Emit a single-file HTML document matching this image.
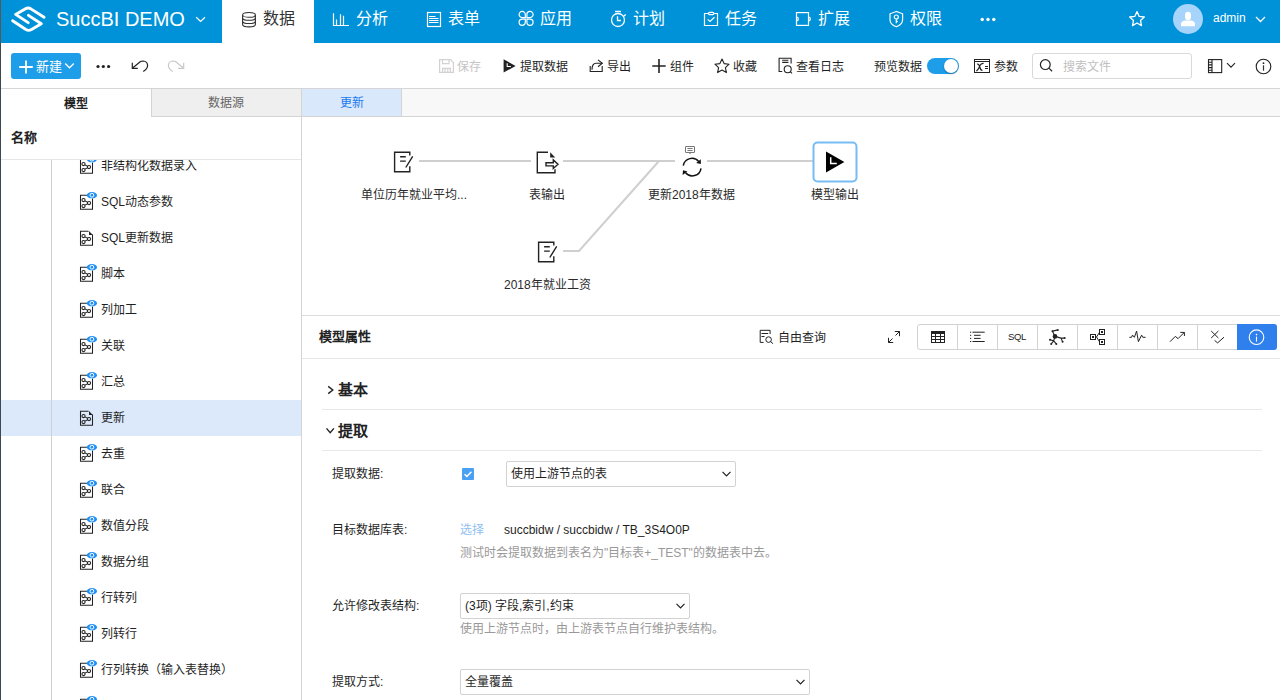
<!DOCTYPE html>
<html lang="zh-CN"><head><meta charset="utf-8">
<style>
*{margin:0;padding:0;box-sizing:border-box}
html,body{width:1280px;height:700px;overflow:hidden;background:#fff;font-family:"Liberation Sans",sans-serif;color:#333;font-size:12px}
.a{position:absolute}
svg{display:block}
#hdr{left:0;top:0;width:1280px;height:43px;background:#0092d8}
.nav{top:-3px;height:43px;color:#fff;font-size:16px;line-height:43px;white-space:nowrap}
.tb{top:43px;height:45px;left:0;width:1280px;background:#fff;border-bottom:1px solid #dcdcdc}
.tt{font-size:12px;line-height:14px;color:#1f1f1f;white-space:nowrap}
.row{left:1px;width:300px;height:36px}
.rt{font-size:12px;line-height:14px;color:#1f1f1f;white-space:nowrap}
.lbl{font-size:12px;line-height:14px;color:#2a2a2a;white-space:nowrap}
</style></head><body>
<!-- left dark edge -->
<div class="a" style="left:0;top:0;width:1px;height:43px;background:#5a5656;z-index:50"></div><div class="a" style="left:0;top:43px;width:1px;height:657px;background:#3f4852;z-index:50"></div>

<!-- HEADER -->
<div id="hdr" class="a"></div>
<div class="a" style="left:222px;top:0;width:92px;height:43px;background:#fff"></div>

<!-- logo -->
<svg class="a" style="left:8px;top:3px" width="42" height="33" viewBox="8 3 42 33"><g fill="none" stroke="#fff" stroke-width="2.9" stroke-linecap="round" stroke-linejoin="round"><path d="M44.1 17.3L31.3 9.1Q28.4 7.1 25.5 8.8L15.6 14.4 28.2 22.6"/><path d="M28.4 15.4L41.3 23.7 31.5 29.5Q28.7 31.2 25.9 29.5L12.6 20.8"/></g></svg>
<div class="a nav" style="left:56px;font-size:20px;top:-2px">SuccBI DEMO</div>
<svg class="a" style="left:195px;top:16px" width="12" height="8" viewBox="0 0 12 8"><path d="M1.2 1.2L5.6 5.4 10 1.2" fill="none" stroke="#fff" stroke-width="1.3"/></svg>
<!-- data tab icon -->
<svg class="a" style="left:241px;top:11px" width="17" height="17" viewBox="0 0 17 17"><g fill="none" stroke="#333" stroke-width="1.1"><ellipse cx="8" cy="3.9" rx="6.4" ry="2.4"/><path d="M1.6 3.9v9.7c0 1.3 2.9 2.3 6.4 2.3s6.4-1 6.4-2.3V3.9"/><path d="M1.6 7c0 1.3 2.9 2.3 6.4 2.3s6.4-1 6.4-2.3M1.6 10.2c0 1.3 2.9 2.3 6.4 2.3s6.4-1 6.4-2.3"/></g></svg>
<div class="a nav" style="left:263px;color:#333">数据</div>
<!-- 分析 -->
<svg class="a" style="left:332px;top:12px" width="18" height="15" viewBox="0 0 18 15"><g fill="none" stroke="#fff" stroke-width="1.2"><path d="M1.5 1.2v12.3H17"/><path d="M4.5 7.5v5.5M8.5 2.2v10.8M11.5 3.7v9.3"/></g></svg>
<div class="a nav" style="left:356px">分析</div>
<!-- 表单 -->
<svg class="a" style="left:426px;top:11px" width="16" height="17" viewBox="0 0 16 17"><g fill="none" stroke="#fff" stroke-width="1.2"><rect x="1.5" y="1.5" width="13" height="14"/><path d="M3 5.5h6.5M3 7.5h9.5M3 9.5h9.5M3 11.5h9.5"/></g></svg>
<div class="a nav" style="left:448px">表单</div>
<!-- 应用 -->
<svg class="a" style="left:514px;top:8px" width="24" height="22" viewBox="0 0 24 22"><g fill="none" stroke="#fff" stroke-width="1.2"><path d="M11.3 9.6H8.2A3.1 3.1 0 1 1 11.3 6.5Z"/><path d="M12.9 9.6H16A3.1 3.1 0 1 0 12.9 6.5Z"/><path d="M11.3 11.2H8.2A3.1 3.1 0 1 0 11.3 14.3Z"/><path d="M12.9 11.2H16A3.1 3.1 0 1 1 12.9 14.3Z"/></g></svg>
<div class="a nav" style="left:540px">应用</div>
<!-- 计划 -->
<svg class="a" style="left:610px;top:10px" width="18" height="18" viewBox="0 0 18 18"><g fill="none" stroke="#fff" stroke-width="1.3"><circle cx="8" cy="10" r="6.5"/><path d="M5.1 1.5h5.8M7.5 6.2v4.3h3.4M13.6 6.3l2.2-1.9"/></g></svg>
<div class="a nav" style="left:633px">计划</div>
<!-- 任务 -->
<svg class="a" style="left:703px;top:11px" width="16" height="16" viewBox="0 0 16 16"><g fill="none" stroke="#fff" stroke-width="1.2"><path d="M5.5 2.5H1.5V14.5H14.5V2.5H10.8"/><rect x="5.5" y="1.3" width="5.3" height="2.3" rx="1.1"/><path d="M4.6 8.4L7 10.4 11.5 6.3"/></g></svg>
<div class="a nav" style="left:725px">任务</div>
<!-- 扩展 -->
<svg class="a" style="left:790px;top:8px" width="26" height="22" viewBox="0 0 26 22"><g fill="none" stroke="#fff" stroke-width="1.2"><rect x="6.5" y="4.6" width="12" height="12.8"/><path d="M6.5 9.2a1.8 1.8 0 0 1 0 3.6M18.5 9.2a1.8 1.8 0 0 1 0 3.6"/></g></svg>
<div class="a nav" style="left:818px">扩展</div>
<!-- 权限 -->
<svg class="a" style="left:888px;top:10px" width="17" height="18" viewBox="0 0 17 18"><g fill="none" stroke="#fff" stroke-width="1.2"><path d="M8.3 1.5L2 3.8v6c0 3.2 3 5.8 6.3 7 3.3-1.2 6.3-3.8 6.3-7v-6z"/><circle cx="8.3" cy="7" r="2"/><path d="M8.3 9v4.3M8.3 11.5h1.6"/></g></svg>
<div class="a nav" style="left:910px">权限</div>
<!-- more -->
<svg class="a" style="left:980px;top:17px" width="16" height="5" viewBox="0 0 16 5"><g fill="#fff"><circle cx="2.2" cy="2.5" r="1.7"/><circle cx="8" cy="2.5" r="1.7"/><circle cx="13.8" cy="2.5" r="1.7"/></g></svg>
<!-- star -->
<svg class="a" style="left:1128px;top:10px" width="18" height="18" viewBox="0 0 18 18"><path d="M9 1.6l2.2 4.8 5.1.6-3.8 3.5 1 5.1L9 13l-4.5 2.6 1-5.1L1.7 7l5.1-.6z" fill="none" stroke="#fff" stroke-width="1.3" stroke-linejoin="round"/></svg>
<!-- avatar -->
<div class="a" style="left:1173px;top:4px;width:30px;height:30px;border-radius:50%;background:#a6d4fa"></div>
<svg class="a" style="left:1173px;top:4px" width="30" height="30" viewBox="0 0 30 30"><g fill="#fff"><ellipse cx="15" cy="12" rx="3.1" ry="4.2"/><path d="M8 22.3v-2.2c0-1.8 1.5-3.2 3.5-3.6h7c2 .4 3.5 1.8 3.5 3.6v2.2z"/></g></svg>
<div class="a nav" style="left:1213px;font-size:12px;line-height:36px;top:0px">admin</div>
<svg class="a" style="left:1255px;top:16px" width="11" height="7" viewBox="0 0 11 7"><path d="M1 1l4.5 4.5L10 1" fill="none" stroke="#fff" stroke-width="1.3"/></svg>

<!-- TOOLBAR -->
<div class="a" style="left:0;top:88px;width:1280px;height:1px;background:#d6d6d6"></div>
<div class="a" style="left:11px;top:53px;width:70px;height:26px;border-radius:3px;background:#1e9de8"></div>
<svg class="a" style="left:18px;top:59px" width="16" height="16" viewBox="0 0 16 16"><path d="M8 1.5v13M1.2 8h13.6" stroke="#fff" stroke-width="1.8"/></svg>
<div class="a tt" style="left:36px;top:60px;color:#fff;font-size:13px">新建</div>
<svg class="a" style="left:64px;top:62px" width="11" height="8" viewBox="0 0 11 8"><path d="M1.2 1.5l4.3 4.3 4.3-4.3" fill="none" stroke="#fff" stroke-width="1.3"/></svg>
<svg class="a" style="left:96px;top:64px" width="15" height="5" viewBox="0 0 15 5"><g fill="#222"><circle cx="2" cy="2.5" r="1.6"/><circle cx="7.3" cy="2.5" r="1.6"/><circle cx="12.6" cy="2.5" r="1.6"/></g></svg>
<svg class="a" style="left:126px;top:54px" width="24" height="24" viewBox="0 0 24 24"><g fill="none" stroke="#222" stroke-width="1.2"><path d="M6.6 14L14.5 7.6Q15.5 7 17 7Q21.5 7.3 21.6 11.5Q21.5 14.8 17.3 17.6"/><path d="M6.3 8.8V14.3H11.8"/></g></svg>
<svg class="a" style="left:166px;top:54px" width="24" height="24" viewBox="0 0 24 24"><g fill="none" stroke="#c8c8c8" stroke-width="1.2"><path d="M17.4 14L9.5 7.6Q8.5 7 7 7Q2.5 7.3 2.4 11.5Q2.5 14.8 6.7 17.6"/><path d="M17.7 8.8V14.3H12.2"/></g></svg>

<svg class="a" style="left:438px;top:58px" width="17" height="16" viewBox="0 0 17 16"><g fill="none" stroke="#d2d2d2" stroke-width="1.2"><path d="M1.6 1.6h10.8l3 3v9.8H1.6z"/><path d="M4.5 1.6v4h6.5v-4M4.6 14.4v-4h7.8v4M7 10.6v3.8M9.8 10.6v3.8"/></g></svg>
<div class="a tt" style="left:457px;top:60px;color:#c4c4c4">保存</div>
<svg class="a" style="left:502px;top:58px" width="16" height="16" viewBox="0 0 16 16"><path d="M1.6 1.2L13.6 7.9 1.6 14.6z" fill="#222"/><path d="M5.2 5.2v3.3h3.7" fill="none" stroke="#fff" stroke-width="1.1"/></svg>
<div class="a tt" style="left:520px;top:60px">提取数据</div>
<svg class="a" style="left:588px;top:58px" width="16" height="16" viewBox="0 0 16 16"><g fill="none" stroke="#222" stroke-width="1.1"><path d="M2.2 8v5.5h12V8"/><path d="M4 11.8c0-4 1.6-6.5 4-6.5h6.3"/><path d="M10 1.9l4.3 3.4-4.3 3.5"/></g></svg>
<div class="a tt" style="left:607px;top:60px">导出</div>
<svg class="a" style="left:651px;top:58px" width="16" height="16" viewBox="0 0 16 16"><path d="M8 1v14M1.3 8h13.4" stroke="#222" stroke-width="1.6"/></svg>
<div class="a tt" style="left:670px;top:60px">组件</div>
<svg class="a" style="left:713px;top:57px" width="18" height="17" viewBox="0 0 18 17"><path d="M9 2l2.1 4.6 5 .6-3.7 3.4 1 5L9 13.1l-4.4 2.5 1-5L1.9 7.2l5-.6z" fill="none" stroke="#222" stroke-width="1.1" stroke-linejoin="round"/></svg>
<div class="a tt" style="left:733px;top:60px">收藏</div>
<svg class="a" style="left:774px;top:54px" width="24" height="24" viewBox="0 0 24 24"><g fill="none" stroke="#222" stroke-width="1.1"><path d="M8.2 17.5H5.1V4.3h12v5.3"/><path d="M8.2 6.3h6.2M8.2 8.4h6.2"/><circle cx="13.7" cy="15.2" r="3.5"/><path d="M16.2 17.7l1.8 1.7"/></g></svg>
<div class="a tt" style="left:796px;top:60px">查看日志</div>

<div class="a tt" style="left:874px;top:60px">预览数据</div>
<div class="a" style="left:927px;top:58px;width:32px;height:16px;border-radius:8px;background:#1e9de8"></div>
<div class="a" style="left:944px;top:59px;width:14px;height:14px;border-radius:50%;background:#fff;box-shadow:0 1px 2px rgba(0,0,0,.3)"></div>
<svg class="a" style="left:973px;top:58px" width="18" height="16" viewBox="0 0 18 16"><g fill="none" stroke="#222" stroke-width="1"><rect x="1.5" y="1.5" width="15" height="13"/><path d="M1.5 3.5h15"/><path d="M3.3 12.8C5 12.5 6 10 7 7.5 7.8 5.6 9 5.2 10.6 5.4M4 6C5.5 5.8 6.3 7 6.8 9 7.3 11 8 12.5 9.4 12.4" stroke-width="1.2"/><path d="M12 8.5h3M12 10.5h3"/></g></svg>
<div class="a tt" style="left:994px;top:60px">参数</div>
<div class="a" style="left:1032px;top:53px;width:160px;height:26px;border:1px solid #d9d9d9;border-radius:3px;background:#fff"></div>
<svg class="a" style="left:1038px;top:57px" width="17" height="17" viewBox="0 0 17 17"><g fill="none" stroke="#222" stroke-width="1.2"><circle cx="7.3" cy="7.6" r="4.9"/><path d="M10.9 11.1l3.2 3.1"/></g></svg>
<div class="a tt" style="left:1063px;top:60px;color:#bfbfbf">搜索文件</div>
<svg class="a" style="left:1207px;top:58px" width="17" height="16" viewBox="0 0 17 16"><g fill="none" stroke="#222" stroke-width="1.1"><rect x="1.5" y="1.6" width="13.2" height="13"/><path d="M5 1.6v13M1.5 4.2H5M1.5 6.9H5M1.5 9.6H5M1.5 12.3H5"/></g></svg>
<svg class="a" style="left:1226px;top:62px" width="10" height="7" viewBox="0 0 10 7"><path d="M1 1.2l4 4 4-4" fill="none" stroke="#222" stroke-width="1.1"/></svg>
<svg class="a" style="left:1254px;top:58px" width="18" height="17" viewBox="0 0 18 17"><g fill="none" stroke="#222" stroke-width="1.1"><circle cx="9.5" cy="8.5" r="7.3"/></g><circle cx="9.5" cy="5.2" r=".9" fill="#222"/><path d="M9.5 7.3v5.4" stroke="#333" stroke-width="1.2"/></svg>

<!-- LEFT PANEL -->
<div class="a" style="left:151px;top:88px;width:150px;height:29px;background:#efefef;border-left:1px solid #d4d4d4;border-top:1px solid #d4d4d4;border-bottom:1px solid #d4d4d4"></div>
<div class="a" style="left:1px;top:91px;width:150px;height:27px;line-height:27px;text-align:center;font-weight:bold;font-size:12px;color:#222">模型</div>
<div class="a" style="left:151px;top:90px;width:150px;height:27px;line-height:27px;text-align:center;font-size:12px;color:#666">数据源</div>
<div class="a" style="left:11px;top:131px;font-weight:bold;font-size:13px;line-height:14px;color:#222">名称</div>
<div class="a" style="left:1px;top:159px;width:300px;height:1px;background:#e6e6e6"></div>
<div class="a" style="left:301px;top:88px;width:1px;height:612px;background:#d4d4d4"></div>
<div class="a" style="left:0;top:160px;width:301px;height:540px;overflow:hidden">
<div class="a" style="left:1px;top:240px;width:300px;height:36px;background:#dbe9fa"></div>
<div class="a" style="left:51px;top:0;width:1px;height:540px;background:#d0d0d0"></div>
<svg class="a" style="left:76px;top:-7px" width="24" height="24" viewBox="0 0 24 24"><g fill="none" stroke="#222" stroke-width="1.05"><path d="M11.8 6.3H4.5V20.3H16.5V9.5"/><circle cx="7.5" cy="11" r="1.6"/><circle cx="7.5" cy="17" r="1.6"/><circle cx="13" cy="14" r="1.6"/><path d="M8.9 11.9l2.7 1.3M8.9 16.1l2.7-1.3"/></g><ellipse cx="15.9" cy="6.2" rx="5.1" ry="3.1" fill="#1e90f5"/><circle cx="15.9" cy="6.2" r="1.9" fill="none" stroke="#fff" stroke-width="1"/></svg>
<div class="a rt" style="left:101px;top:-1px">非结构化数据录入</div>
<svg class="a" style="left:76px;top:29px" width="24" height="24" viewBox="0 0 24 24"><g fill="none" stroke="#222" stroke-width="1.05"><path d="M11.8 6.3H4.5V20.3H16.5V9.5"/><circle cx="7.5" cy="11" r="1.6"/><circle cx="7.5" cy="17" r="1.6"/><circle cx="13" cy="14" r="1.6"/><path d="M8.9 11.9l2.7 1.3M8.9 16.1l2.7-1.3"/></g><ellipse cx="15.9" cy="6.2" rx="5.1" ry="3.1" fill="#1e90f5"/><circle cx="15.9" cy="6.2" r="1.9" fill="none" stroke="#fff" stroke-width="1"/></svg>
<div class="a rt" style="left:101px;top:35px">SQL动态参数</div>
<svg class="a" style="left:76px;top:65px" width="24" height="24" viewBox="0 0 24 24"><g fill="none" stroke="#222" stroke-width="1.05"><path d="M12.6 6.3H4.5V20.3H16.5V9.6"/><circle cx="7.5" cy="11" r="1.6"/><circle cx="7.5" cy="17" r="1.6"/><circle cx="13" cy="14" r="1.6"/><path d="M8.9 11.9l2.7 1.3M8.9 16.1l2.7-1.3"/></g><path d="M13 6.1L16.8 9.9H13z" fill="#222"/></svg>
<div class="a rt" style="left:101px;top:71px">SQL更新数据</div>
<svg class="a" style="left:76px;top:101px" width="24" height="24" viewBox="0 0 24 24"><g fill="none" stroke="#222" stroke-width="1.05"><path d="M11.8 6.3H4.5V20.3H16.5V9.5"/><circle cx="7.5" cy="11" r="1.6"/><circle cx="7.5" cy="17" r="1.6"/><circle cx="13" cy="14" r="1.6"/><path d="M8.9 11.9l2.7 1.3M8.9 16.1l2.7-1.3"/></g><ellipse cx="15.9" cy="6.2" rx="5.1" ry="3.1" fill="#1e90f5"/><circle cx="15.9" cy="6.2" r="1.9" fill="none" stroke="#fff" stroke-width="1"/></svg>
<div class="a rt" style="left:101px;top:107px">脚本</div>
<svg class="a" style="left:76px;top:137px" width="24" height="24" viewBox="0 0 24 24"><g fill="none" stroke="#222" stroke-width="1.05"><path d="M11.8 6.3H4.5V20.3H16.5V9.5"/><circle cx="7.5" cy="11" r="1.6"/><circle cx="7.5" cy="17" r="1.6"/><circle cx="13" cy="14" r="1.6"/><path d="M8.9 11.9l2.7 1.3M8.9 16.1l2.7-1.3"/></g><ellipse cx="15.9" cy="6.2" rx="5.1" ry="3.1" fill="#1e90f5"/><circle cx="15.9" cy="6.2" r="1.9" fill="none" stroke="#fff" stroke-width="1"/></svg>
<div class="a rt" style="left:101px;top:143px">列加工</div>
<svg class="a" style="left:76px;top:173px" width="24" height="24" viewBox="0 0 24 24"><g fill="none" stroke="#222" stroke-width="1.05"><path d="M11.8 6.3H4.5V20.3H16.5V9.5"/><circle cx="7.5" cy="11" r="1.6"/><circle cx="7.5" cy="17" r="1.6"/><circle cx="13" cy="14" r="1.6"/><path d="M8.9 11.9l2.7 1.3M8.9 16.1l2.7-1.3"/></g><ellipse cx="15.9" cy="6.2" rx="5.1" ry="3.1" fill="#1e90f5"/><circle cx="15.9" cy="6.2" r="1.9" fill="none" stroke="#fff" stroke-width="1"/></svg>
<div class="a rt" style="left:101px;top:179px">关联</div>
<svg class="a" style="left:76px;top:209px" width="24" height="24" viewBox="0 0 24 24"><g fill="none" stroke="#222" stroke-width="1.05"><path d="M11.8 6.3H4.5V20.3H16.5V9.5"/><circle cx="7.5" cy="11" r="1.6"/><circle cx="7.5" cy="17" r="1.6"/><circle cx="13" cy="14" r="1.6"/><path d="M8.9 11.9l2.7 1.3M8.9 16.1l2.7-1.3"/></g><ellipse cx="15.9" cy="6.2" rx="5.1" ry="3.1" fill="#1e90f5"/><circle cx="15.9" cy="6.2" r="1.9" fill="none" stroke="#fff" stroke-width="1"/></svg>
<div class="a rt" style="left:101px;top:215px">汇总</div>
<svg class="a" style="left:76px;top:245px" width="24" height="24" viewBox="0 0 24 24"><g fill="none" stroke="#222" stroke-width="1.05"><path d="M12.6 6.3H4.5V20.3H16.5V9.6"/><circle cx="7.5" cy="11" r="1.6"/><circle cx="7.5" cy="17" r="1.6"/><circle cx="13" cy="14" r="1.6"/><path d="M8.9 11.9l2.7 1.3M8.9 16.1l2.7-1.3"/></g><path d="M13 6.1L16.8 9.9H13z" fill="#222"/></svg>
<div class="a rt" style="left:101px;top:251px">更新</div>
<svg class="a" style="left:76px;top:281px" width="24" height="24" viewBox="0 0 24 24"><g fill="none" stroke="#222" stroke-width="1.05"><path d="M11.8 6.3H4.5V20.3H16.5V9.5"/><circle cx="7.5" cy="11" r="1.6"/><circle cx="7.5" cy="17" r="1.6"/><circle cx="13" cy="14" r="1.6"/><path d="M8.9 11.9l2.7 1.3M8.9 16.1l2.7-1.3"/></g><ellipse cx="15.9" cy="6.2" rx="5.1" ry="3.1" fill="#1e90f5"/><circle cx="15.9" cy="6.2" r="1.9" fill="none" stroke="#fff" stroke-width="1"/></svg>
<div class="a rt" style="left:101px;top:287px">去重</div>
<svg class="a" style="left:76px;top:317px" width="24" height="24" viewBox="0 0 24 24"><g fill="none" stroke="#222" stroke-width="1.05"><path d="M11.8 6.3H4.5V20.3H16.5V9.5"/><circle cx="7.5" cy="11" r="1.6"/><circle cx="7.5" cy="17" r="1.6"/><circle cx="13" cy="14" r="1.6"/><path d="M8.9 11.9l2.7 1.3M8.9 16.1l2.7-1.3"/></g><ellipse cx="15.9" cy="6.2" rx="5.1" ry="3.1" fill="#1e90f5"/><circle cx="15.9" cy="6.2" r="1.9" fill="none" stroke="#fff" stroke-width="1"/></svg>
<div class="a rt" style="left:101px;top:323px">联合</div>
<svg class="a" style="left:76px;top:353px" width="24" height="24" viewBox="0 0 24 24"><g fill="none" stroke="#222" stroke-width="1.05"><path d="M11.8 6.3H4.5V20.3H16.5V9.5"/><circle cx="7.5" cy="11" r="1.6"/><circle cx="7.5" cy="17" r="1.6"/><circle cx="13" cy="14" r="1.6"/><path d="M8.9 11.9l2.7 1.3M8.9 16.1l2.7-1.3"/></g><ellipse cx="15.9" cy="6.2" rx="5.1" ry="3.1" fill="#1e90f5"/><circle cx="15.9" cy="6.2" r="1.9" fill="none" stroke="#fff" stroke-width="1"/></svg>
<div class="a rt" style="left:101px;top:359px">数值分段</div>
<svg class="a" style="left:76px;top:389px" width="24" height="24" viewBox="0 0 24 24"><g fill="none" stroke="#222" stroke-width="1.05"><path d="M11.8 6.3H4.5V20.3H16.5V9.5"/><circle cx="7.5" cy="11" r="1.6"/><circle cx="7.5" cy="17" r="1.6"/><circle cx="13" cy="14" r="1.6"/><path d="M8.9 11.9l2.7 1.3M8.9 16.1l2.7-1.3"/></g><ellipse cx="15.9" cy="6.2" rx="5.1" ry="3.1" fill="#1e90f5"/><circle cx="15.9" cy="6.2" r="1.9" fill="none" stroke="#fff" stroke-width="1"/></svg>
<div class="a rt" style="left:101px;top:395px">数据分组</div>
<svg class="a" style="left:76px;top:425px" width="24" height="24" viewBox="0 0 24 24"><g fill="none" stroke="#222" stroke-width="1.05"><path d="M11.8 6.3H4.5V20.3H16.5V9.5"/><circle cx="7.5" cy="11" r="1.6"/><circle cx="7.5" cy="17" r="1.6"/><circle cx="13" cy="14" r="1.6"/><path d="M8.9 11.9l2.7 1.3M8.9 16.1l2.7-1.3"/></g><ellipse cx="15.9" cy="6.2" rx="5.1" ry="3.1" fill="#1e90f5"/><circle cx="15.9" cy="6.2" r="1.9" fill="none" stroke="#fff" stroke-width="1"/></svg>
<div class="a rt" style="left:101px;top:431px">行转列</div>
<svg class="a" style="left:76px;top:461px" width="24" height="24" viewBox="0 0 24 24"><g fill="none" stroke="#222" stroke-width="1.05"><path d="M11.8 6.3H4.5V20.3H16.5V9.5"/><circle cx="7.5" cy="11" r="1.6"/><circle cx="7.5" cy="17" r="1.6"/><circle cx="13" cy="14" r="1.6"/><path d="M8.9 11.9l2.7 1.3M8.9 16.1l2.7-1.3"/></g><ellipse cx="15.9" cy="6.2" rx="5.1" ry="3.1" fill="#1e90f5"/><circle cx="15.9" cy="6.2" r="1.9" fill="none" stroke="#fff" stroke-width="1"/></svg>
<div class="a rt" style="left:101px;top:467px">列转行</div>
<svg class="a" style="left:76px;top:497px" width="24" height="24" viewBox="0 0 24 24"><g fill="none" stroke="#222" stroke-width="1.05"><path d="M11.8 6.3H4.5V20.3H16.5V9.5"/><circle cx="7.5" cy="11" r="1.6"/><circle cx="7.5" cy="17" r="1.6"/><circle cx="13" cy="14" r="1.6"/><path d="M8.9 11.9l2.7 1.3M8.9 16.1l2.7-1.3"/></g><ellipse cx="15.9" cy="6.2" rx="5.1" ry="3.1" fill="#1e90f5"/><circle cx="15.9" cy="6.2" r="1.9" fill="none" stroke="#fff" stroke-width="1"/></svg>
<div class="a rt" style="left:101px;top:503px">行列转换（输入表替换）</div>
<svg class="a" style="left:76px;top:533px" width="24" height="24" viewBox="0 0 24 24"><g fill="none" stroke="#222" stroke-width="1.05"><path d="M11.8 6.3H4.5V20.3H16.5V9.5"/><circle cx="7.5" cy="11" r="1.6"/><circle cx="7.5" cy="17" r="1.6"/><circle cx="13" cy="14" r="1.6"/><path d="M8.9 11.9l2.7 1.3M8.9 16.1l2.7-1.3"/></g><ellipse cx="15.9" cy="6.2" rx="5.1" ry="3.1" fill="#1e90f5"/><circle cx="15.9" cy="6.2" r="1.9" fill="none" stroke="#fff" stroke-width="1"/></svg>
</div>

<!-- RIGHT TABBAR -->
<div class="a" style="left:302px;top:89px;width:99px;height:27px;background:#d9e8fa"></div>
<div class="a" style="left:401px;top:89px;width:1px;height:27px;background:#d4d4d4"></div>
<div class="a" style="left:402px;top:89px;width:878px;height:27px;background:#f8f8f8"></div>
<div class="a" style="left:302px;top:116px;width:978px;height:1px;background:#d4d4d4"></div>
<div class="a" style="left:302px;top:90px;width:99px;height:27px;line-height:27px;text-align:center;font-size:12px;color:#1c7af0">更新</div>

<!-- CANVAS -->
<svg class="a" style="left:302px;top:117px" width="978" height="199" viewBox="302 117 978 199">
<g fill="none" stroke="#cfcfcf" stroke-width="2">
<path d="M419 161H531M563 161H675M707 161H813"/>
<path d="M563 251H579L659 161"/>
</g>
<!-- node1 -->
<g fill="none" stroke="#222" stroke-width="1.4">
<path d="M409.8 155.6V152.2H394.6V171.8H409.8V166.3"/>
<path d="M400.1 156.7H405.8M400.1 161.1H405.8M412.7 156.3L405.8 167.5"/>
</g>
<!-- node3 -->
<g fill="none" stroke="#222" stroke-width="1.4" transform="translate(144 90)">
<path d="M409.8 155.6V152.2H394.6V171.8H409.8V166.3"/>
<path d="M400.1 156.7H405.8M400.1 161.1H405.8M412.7 156.3L405.8 167.5"/>
</g>
<!-- node2 -->
<g fill="none" stroke="#222" stroke-width="1.4">
<path d="M548 152.2H537.3V172.8H555V169.3"/>
<path d="M546 162.7H553.3V159.9L558 164.3L553.3 168.5V165.9H546Z"/>
</g>
<path d="M550.2 152.3L555.2 157.4H550.2Z" fill="#222"/>
<!-- node4 refresh -->
<g fill="none" stroke="#777" stroke-width="1">
<rect x="685.5" y="146.5" width="9" height="6" rx=".3"/>
<path d="M687.4 148.5H692.6M687.4 150.5H692.6"/>
</g>
<path d="M689 153h2l-1 1.2z" fill="#777"/>
<g fill="none" stroke="#111" stroke-width="1.5">
<path d="M683.3 165.6A8.8 8.8 0 0 1 698.8 161.6"/>
<path d="M701 168.3A8.8 8.8 0 0 1 685.6 172.8"/>
</g>
<path d="M696.2 162.9L700.8 159.2V163.9Z" fill="#111"/>
<path d="M682.6 175L683 170.3L687.5 171.6Z" fill="#111"/>
<!-- node5 selected -->
<rect x="813.5" y="142.5" width="43" height="39" rx="4" fill="#fff" stroke="#77bdf5" stroke-width="2"/>
<path d="M826 151.4L844.4 161.9 826 172.4Z" fill="#000"/>
<path d="M830.7 157.3V163.4H836.8" fill="none" stroke="#fff" stroke-width="1.5"/>
</svg>
<div class="a lbl" style="left:361px;top:188px">单位历年就业平均...</div>
<div class="a lbl" style="left:529px;top:188px">表输出</div>
<div class="a lbl" style="left:648px;top:188px">更新2018年数据</div>
<div class="a lbl" style="left:811px;top:188px">模型输出</div>
<div class="a lbl" style="left:504px;top:278px">2018年就业工资</div>
<div class="a" style="left:302px;top:315px;width:978px;height:1px;background:#dcdcdc"></div>

<!-- PROPERTY PANEL -->
<div class="a" style="left:319px;top:330px;font-weight:bold;font-size:13px;line-height:14px;color:#222">模型属性</div>
<svg class="a" style="left:756px;top:326px" width="20" height="20" viewBox="756 326 20 20"><g fill="none" stroke="#222" stroke-width="1"><path d="M763.6 342.4H760.2V330.3H770.1V334"/><path d="M761.5 333.5H768.2M761.5 336.5H764.5"/><circle cx="768.6" cy="339.6" r="2.8"/><path d="M770.7 341.7L773 343.7"/></g></svg>
<div class="a tt" style="left:778px;top:331px">自由查询</div>
<svg class="a" style="left:884px;top:327px" width="20" height="20" viewBox="884 327 20 20"><g fill="none" stroke="#222" stroke-width="1"><path d="M894.8 331.5H899.5V336.2M899.5 331.5L895.5 335.5"/><path d="M893.2 342.5H888.5V337.8M888.5 342.5L892.5 338.5"/></g></svg>
<div class="a" style="left:917px;top:324px;width:360px;height:26px;border:1px solid #d2d2d2;border-radius:3px"></div>
<div class="a" style="left:957px;top:325px;width:1px;height:24px;background:#d2d2d2"></div>
<div class="a" style="left:997px;top:325px;width:1px;height:24px;background:#d2d2d2"></div>
<div class="a" style="left:1037px;top:325px;width:1px;height:24px;background:#d2d2d2"></div>
<div class="a" style="left:1077px;top:325px;width:1px;height:24px;background:#d2d2d2"></div>
<div class="a" style="left:1117px;top:325px;width:1px;height:24px;background:#d2d2d2"></div>
<div class="a" style="left:1157px;top:325px;width:1px;height:24px;background:#d2d2d2"></div>
<div class="a" style="left:1197px;top:325px;width:1px;height:24px;background:#d2d2d2"></div>
<div class="a" style="left:1237px;top:324px;width:40px;height:26px;background:#2f80ed;border-radius:0 3px 3px 0"></div>
<svg class="a" style="left:917px;top:324px" width="360" height="26" viewBox="917 324 360 26">
<!-- table -->
<g fill="none" stroke="#222" stroke-width="1"><path d="M931.5 331V343M944.5 331V343M931 336.5H945M931 339.5H945M931 342.5H945M935.5 334V343M940.5 334V343"/></g>
<rect x="931" y="331" width="14" height="3" fill="#222"/>
<!-- list -->
<g fill="none" stroke="#222" stroke-width="1"><path d="M972.5 332.2H984.7M974 335.3H980.6M974 338.4H980.6M972.5 341.5H984.7"/></g>
<g fill="#222"><rect x="970" y="331.7" width="1.2" height="1"/><rect x="970" y="334.8" width="1.2" height="1"/><rect x="970" y="337.9" width="1.2" height="1"/><rect x="970" y="341" width="1.2" height="1"/></g>
<!-- network -->
<g fill="none" stroke="#222" stroke-width="1.1"><path d="M1055 336.4L1052.5 331.2L1057.8 329.9M1055 336.4L1061 338.1H1064.7M1061 338.1L1062.6 341.7M1055 336.4L1053.7 340.8L1050 339.8M1053.7 340.8L1051.2 343.9M1053.7 340.8L1056.3 343.9"/></g>
<g fill="#222"><circle cx="1055" cy="336.4" r="2.3"/><circle cx="1057.8" cy="329.9" r="1"/><circle cx="1052.5" cy="331.2" r="1"/><circle cx="1064.7" cy="338.1" r="1"/><circle cx="1062.6" cy="341.7" r="1"/><circle cx="1050" cy="339.8" r="1"/><circle cx="1051.2" cy="343.9" r="1"/><circle cx="1056.3" cy="343.9" r="1"/></g>
<!-- tree -->
<g fill="none" stroke="#222" stroke-width="1"><rect x="1090.5" y="334.5" width="5" height="5"/><rect x="1099.5" y="329.5" width="5" height="5"/><rect x="1099.5" y="339.5" width="5" height="5"/><path d="M1095.5 337H1096.5L1099.5 332.3M1096.5 337L1099.5 341.8"/></g>
<g fill="#222"><rect x="1092" y="336" width="2" height="2"/><rect x="1101" y="331" width="2" height="2"/><rect x="1101" y="341" width="2" height="2"/></g>
<!-- pulse -->
<path d="M1129.4 337.3H1131.6L1132.5 335.1L1134.4 337.3L1136.6 331L1138.4 341.7L1141.6 335.1L1142.8 337.3H1145.6" fill="none" stroke="#222" stroke-width="1"/>
<!-- trend -->
<g fill="none" stroke="#222" stroke-width="1"><path d="M1170 341.7L1175.3 336.4L1178.1 338.6L1184 332.7"/><path d="M1180.3 332.4H1184.4V336"/></g>
<!-- x check -->
<g fill="none" stroke="#222" stroke-width="1"><path d="M1211.2 331L1218.4 338M1218.4 331L1211.2 338"/><path d="M1214.6 340.4L1217.6 342.9L1224 337.2"/></g>
<!-- info -->
<g fill="none" stroke="#fff" stroke-width="1.1"><circle cx="1256.5" cy="337.2" r="7.3"/><path d="M1256.5 336.6V341.6"/></g>
<circle cx="1256.5" cy="334.6" r=".8" fill="#fff"/>
</svg>
<div class="a" style="left:997px;top:330px;width:40px;text-align:center;font-size:9.5px;line-height:14px;color:#222;letter-spacing:-.4px">SQL</div>
<div class="a" style="left:302px;top:358px;width:978px;height:1px;background:#e6e6e6"></div>

<!-- sections -->
<svg class="a" style="left:324px;top:383px" width="14" height="14" viewBox="0 0 14 14"><path d="M4.2 3.4L8.8 7 4.2 10.6" fill="none" stroke="#222" stroke-width="1.4"/></svg>
<div class="a" style="left:338px;top:382px;font-weight:bold;font-size:15px;line-height:15px;color:#222">基本</div>
<div class="a" style="left:322px;top:409px;width:940px;height:1px;background:#e8e8e8"></div>
<svg class="a" style="left:323px;top:424px" width="14" height="14" viewBox="0 0 14 14"><path d="M3.5 4.4L7.2 8.6 10.9 4.4" fill="none" stroke="#222" stroke-width="1.4"/></svg>
<div class="a" style="left:338px;top:423px;font-weight:bold;font-size:15px;line-height:15px;color:#222">提取</div>
<div class="a" style="left:322px;top:450px;width:940px;height:1px;background:#e8e8e8"></div>

<!-- form -->
<div class="a tt" style="left:332px;top:467px">提取数据:</div>
<div class="a" style="left:462px;top:468px;width:12px;height:12px;background:#4aa0f2;border-radius:1px"></div>
<svg class="a" style="left:462px;top:468px" width="12" height="12" viewBox="0 0 12 12"><path d="M2.6 6.2l2.3 2.2 4.5-4.6" fill="none" stroke="#fff" stroke-width="1.5"/></svg>
<div class="a" style="left:506px;top:461px;width:230px;height:26px;border:1px solid #d2d2d2;border-radius:2px"></div>
<div class="a tt" style="left:511px;top:467px">使用上游节点的表</div>
<svg class="a" style="left:721px;top:470px" width="11" height="8" viewBox="0 0 11 8"><path d="M1.5 1.8l4 4 4-4" fill="none" stroke="#222" stroke-width="1.2"/></svg>

<div class="a tt" style="left:332px;top:523px">目标数据库表:</div>
<div class="a tt" style="left:460px;top:523px;color:#8fc1f0">选择</div>
<div class="a tt" style="left:504px;top:523px">succbidw / succbidw / TB_3S4O0P</div>
<div class="a tt" style="left:460px;top:546px;color:#999">测试时会提取数据到表名为"目标表+_TEST"的数据表中去。</div>

<div class="a tt" style="left:332px;top:599px">允许修改表结构:</div>
<div class="a" style="left:460px;top:593px;width:230px;height:26px;border:1px solid #d2d2d2;border-radius:2px"></div>
<div class="a tt" style="left:465px;top:599px">(3项) 字段,索引,约束</div>
<svg class="a" style="left:675px;top:602px" width="11" height="8" viewBox="0 0 11 8"><path d="M1.5 1.8l4 4 4-4" fill="none" stroke="#222" stroke-width="1.2"/></svg>
<div class="a tt" style="left:460px;top:622px;color:#999">使用上游节点时，由上游表节点自行维护表结构。</div>

<div class="a tt" style="left:332px;top:675px">提取方式:</div>
<div class="a" style="left:460px;top:669px;width:350px;height:26px;border:1px solid #d2d2d2;border-radius:2px"></div>
<div class="a tt" style="left:465px;top:675px">全量覆盖</div>
<svg class="a" style="left:795px;top:678px" width="11" height="8" viewBox="0 0 11 8"><path d="M1.5 1.8l4 4 4-4" fill="none" stroke="#222" stroke-width="1.2"/></svg>
</body></html>
